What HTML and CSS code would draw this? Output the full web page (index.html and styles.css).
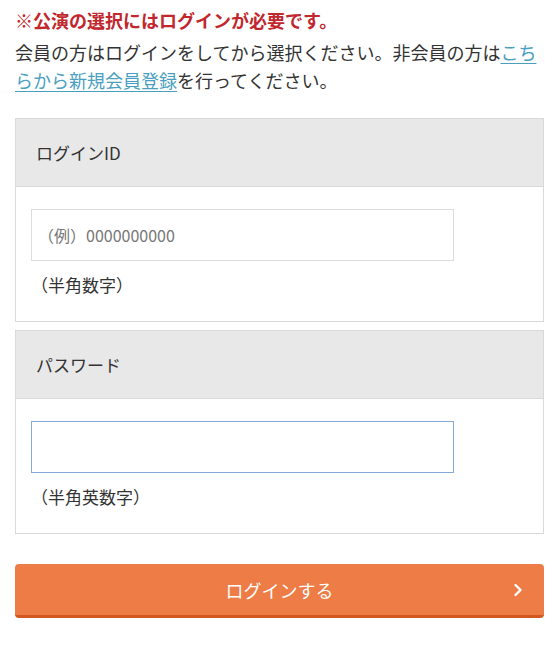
FILE: index.html
```html
<!DOCTYPE html>
<html lang="ja">
<head>
<meta charset="utf-8">
<title>ログイン</title>
<link rel="stylesheet" href="styles.css">
</head>
<body>
<div class="page">
  <p class="notice">※公演の選択にはログインが必要です。</p>
  <p class="lead">会員の方はログインをしてから選択ください。非会員の方は<a class="link" href="#">こちらから新規会員登録</a>を行ってください。</p>

  <section class="card">
    <div class="card-head">ログインID</div>
    <div class="card-body">
      <input class="field" type="text" placeholder="（例）0000000000">
      <p class="hint">（半角数字）</p>
    </div>
  </section>

  <section class="card card-second">
    <div class="card-head">パスワード</div>
    <div class="card-body">
      <input class="field field-focus" type="password">
      <p class="hint">（半角英数字）</p>
    </div>
  </section>

  <button class="submit" type="button">
    <span class="submit-label">ログインする</span>
    <svg class="submit-arrow" width="10" height="14" viewBox="0 0 10 14"><path d="M2.5 2 L7.5 7 L2.5 12" fill="none" stroke="#fff" stroke-width="2.4" stroke-linecap="round" stroke-linejoin="round"/></svg>
  </button>
</div>
</body>
</html>
```

FILE: styles.css
```css
* { box-sizing: border-box; }
html, body { margin: 0; padding: 0; background: #fff; }
body {
  font-family: "Noto Sans CJK JP", "Noto Sans", sans-serif;
  color: #333;
}
.page {
  padding: 6px 15px 0 15px;
}
.notice {
  margin: 0;
  font-size: 18px;
  line-height: 28px;
  font-weight: bold;
  color: #c1272d;
}
.lead {
  margin: 4px 0 0 0;
  font-size: 18px;
  line-height: 28px;
  color: #333;
}
.link {
  color: #4a9fc0;
  text-decoration: underline;
  text-underline-offset: 3px;
}
.card {
  margin-top: 24px;
  border: 1px solid #d9d9d9;
  background: #fff;
}
.card-second { margin-top: 8px; }
.card-head {
  height: 68px;
  background: #e8e8e8;
  border-bottom: 1px solid #d9d9d9;
  padding: 0 20px;
  display: flex;
  align-items: center;
  font-size: 17px;
  color: #333;
}
.card-body {
  padding: 22px 15px 22px 15px;
}
.field {
  display: block;
  width: 423px;
  height: 52px;
  border: 1px solid #dcdcdc;
  background: #fff;
  padding: 0 6px;
  font-family: "Noto Sans CJK JP", "Noto Sans", sans-serif;
  font-size: 16px;
  color: #333;
  outline: none;
  margin: 0;
}
.field::placeholder { color: #777; }
.field-focus { border-color: #87a9dc; }
.hint {
  margin: 10px 0 0 0;
  font-size: 17px;
  line-height: 28px;
  color: #333;
}
.submit {
  margin-top: 30px;
  width: 100%;
  height: 54px;
  border: none;
  border-bottom: 3px solid #d3581f;
  border-radius: 4px;
  background: #ee7c46;
  color: #fff;
  font-family: "Noto Sans CJK JP", "Noto Sans", sans-serif;
  font-size: 18px;
  position: relative;
  display: flex;
  align-items: center;
  justify-content: center;
  padding: 0;
  cursor: pointer;
}
.submit-label { line-height: 1; }
.submit-arrow {
  position: absolute;
  right: 21px;
  top: 19px;
}
```
